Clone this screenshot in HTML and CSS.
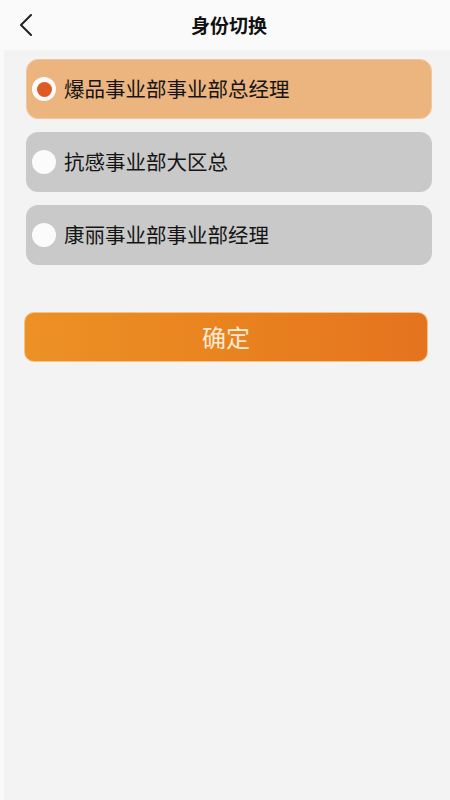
FILE: index.html
```html
<!DOCTYPE html>
<html lang="zh-CN">
<head>
<meta charset="utf-8">
<link rel="stylesheet" href="styles.css">
</head>
<body>
<div class="page">
  <header class="nav">
    <span class="back">
      <svg width="14" height="22" viewBox="0 0 14 22"><path d="M12 1 L2 11 L12 21" fill="none" stroke="#222" stroke-width="2" stroke-linecap="round" stroke-linejoin="round"/></svg>
    </span>
    <h1 class="title">身份切换</h1>
  </header>
  <main class="content">
    <ul class="list">
      <li class="item active"><span class="radio"><span class="dot"></span></span><span class="label">爆品事业部事业部总经理</span></li>
      <li class="item"><span class="radio"></span><span class="label">抗感事业部大区总</span></li>
      <li class="item"><span class="radio"></span><span class="label">康丽事业部事业部经理</span></li>
    </ul>
    <button class="confirm">确定</button>
  </main>
</div>
</body>
</html>
```
FILE: styles.css
```css
html, body {
  margin: 0;
  padding: 0;
  height: 100%;
}
body {
  background: #fafafa;
  font-family: "Noto Sans CJK SC", "Noto Sans", sans-serif;
  color: #151515;
}
.page {
  display: flex;
  flex-direction: column;
  height: 100%;
}
.nav {
  height: 50px;
  flex: none;
  display: flex;
  align-items: center;
  justify-content: center;
  position: relative;
  background: #fafafa;
}
.back {
  position: absolute;
  left: 19px;
  top: 14px;
  display: flex;
}
.title {
  margin: 0;
  font-size: 19px;
  font-weight: 700;
  color: #111;
  padding-left: 8px;
  padding-bottom: 2px;
}
.content {
  flex: 1;
  margin-left: 4px;
  background: #f3f3f3;
  padding-top: 9px;
}
.list {
  list-style: none;
  margin: 0 18px 0 22px;
  padding: 0;
  display: flex;
  flex-direction: column;
  gap: 13px;
}
.item {
  height: 60px;
  box-sizing: border-box;
  border-radius: 12px;
  background: #c9c9c9;
  display: flex;
  align-items: center;
  padding-left: 6px;
  gap: 8px;
  font-size: 20.5px;
}
.item.active {
  background: #ecb47f;
  border: 1px solid #f3c79b;
  padding-left: 5px;
}
.radio {
  width: 24px;
  height: 24px;
  border-radius: 50%;
  background: #fbfbfb;
  display: flex;
  align-items: center;
  justify-content: center;
  flex: none;
}
.dot {
  width: 15px;
  height: 15px;
  border-radius: 50%;
  background: #e05a24;
}
.label {
  line-height: 1;
  padding-bottom: 2px;
}
.confirm {
  display: block;
  box-sizing: border-box;
  margin: 47px 22px 0 20px;
  width: calc(100% - 42px);
  height: 50px;
  border: 1px solid #f6c47e;
  border-radius: 10px;
  background: linear-gradient(90deg, #ec9125 0%, #e9831f 50%, #e5731f 100%);
  color: #fdebd6;
  font-family: "Noto Sans CJK SC", "Noto Sans", sans-serif;
  font-size: 24px;
  padding: 0 0 2px;
}
```
